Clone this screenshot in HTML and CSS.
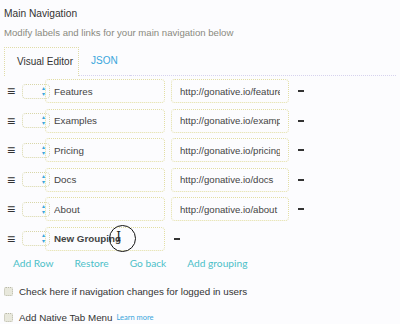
FILE: index.html
```html
<!DOCTYPE html>
<html lang="en">
<head>
    <meta charset="UTF-8">
    <meta name="viewport" content="width=device-width, initial-scale=1.0">
    <title>Main Navigation</title>
    <link rel="stylesheet" href="styles.css">
</head>
<body>
    <h1 class="title">Main Navigation</h1>
    <p class="subtitle">Modify labels and links for your main navigation below</p>

    <!-- tabs -->
    <div class="tabs">
        <div class="tab active">Visual Editor</div>
        <a class="tab" href="#">JSON</a>
        <div class="tab-fill"></div>
    </div>

    <!-- navigation rows -->
    <div class="rows">
        <div class="row">
            <span class="handle">&#8801;</span>
            <span class="level"><span class="arrows">&#9652;<br>&#9662;</span></span>
            <input class="label-input" type="text" value="Features">
            <input class="url-input" type="text" value="http://gonative.io/features">
            <span class="remove"></span>
        </div>
        <div class="row">
            <span class="handle">&#8801;</span>
            <span class="level"><span class="arrows">&#9652;<br>&#9662;</span></span>
            <input class="label-input" type="text" value="Examples">
            <input class="url-input" type="text" value="http://gonative.io/examples">
            <span class="remove"></span>
        </div>
        <div class="row">
            <span class="handle">&#8801;</span>
            <span class="level"><span class="arrows">&#9652;<br>&#9662;</span></span>
            <input class="label-input" type="text" value="Pricing">
            <input class="url-input" type="text" value="http://gonative.io/pricing">
            <span class="remove"></span>
        </div>
        <div class="row">
            <span class="handle">&#8801;</span>
            <span class="level"><span class="arrows">&#9652;<br>&#9662;</span></span>
            <input class="label-input" type="text" value="Docs">
            <input class="url-input" type="text" value="http://gonative.io/docs">
            <span class="remove"></span>
        </div>
        <div class="row">
            <span class="handle">&#8801;</span>
            <span class="level"><span class="arrows">&#9652;<br>&#9662;</span></span>
            <input class="label-input" type="text" value="About">
            <input class="url-input" type="text" value="http://gonative.io/about">
            <span class="remove"></span>
        </div>
        <div class="row">
            <span class="handle">&#8801;</span>
            <span class="level"><span class="arrows">&#9652;<br>&#9662;</span></span>
            <div class="group-wrap">
                <input class="label-input group" type="text" value="New Grouping">
                <!-- screen recorder click marker -->
                <span class="cursor-ring"><span class="ibeam">I</span></span>
            </div>
            <span class="remove"></span>
        </div>
    </div>

    <div class="actions">
        <a href="#">Add Row</a>
        <a href="#">Restore</a>
        <a href="#">Go back</a>
        <a href="#">Add grouping</a>
    </div>

    <label class="option"><span class="check"></span>Check here if navigation changes for logged in users</label>
    <label class="option"><span class="check"></span>Add Native Tab Menu <a class="learn" href="#">Learn more</a></label>
</body>
</html>
```

FILE: styles.css
```css
body {
    margin: 0;
    padding: 0 4px;
    background: #fcfcfe;
    font-family: "Liberation Sans", Arial, sans-serif;
    font-size: 10px;
    color: #333;
}

.title {
    margin: 0;
    padding-top: 7px;
    font-size: 10.2px;
    font-weight: normal;
    color: #333;
    line-height: 13px;
}

.subtitle {
    margin: 6px 0 0;
    line-height: 13px;
    font-size: 9.6px;
    color: #8a8a80;
}

.tabs {
    display: flex;
    margin-top: 8px;
    height: 29px;
}

.tab {
    padding: 0 12px;
    line-height: 28px;
    white-space: nowrap;
    color: #3aa6dc;
    text-decoration: none;
    border-bottom: 1px dotted #d6d2ee;
}

.tab.active {
    width: 49px;
    color: #333;
    border: 1px dotted #e0dca8;
    border-bottom: none;
}

.tab-fill {
    flex: 1;
    border-bottom: 1px dotted #d6d2ee;
}

.rows {
    padding-top: 3px;
}

.row {
    display: flex;
    align-items: center;
    height: 24px;
    margin-bottom: 5.6px;
}

.handle {
    box-sizing: border-box;
    width: 18px;
    padding-left: 3px;
    font-size: 14px;
    font-weight: bold;
    color: #333;
}

.level {
    width: 26px;
    height: 13px;
    border: 1px dotted #d8d6a8;
    border-radius: 4px;
    text-align: right;
    margin-right: -5px;
    position: relative;
    z-index: 1;
}

.arrows {
    display: inline-block;
    padding-right: 4px;
    font-size: 6px;
    line-height: 6px;
    color: #3aa6dc;
}

.label-input,
.url-input {
    box-sizing: border-box;
    height: 24px;
    margin: 0;
    padding: 0 8px;
    border: 1px dotted #e2dea2;
    border-radius: 4px;
    background: #fcfcfe;
    font-family: "Liberation Sans", Arial, sans-serif;
    font-size: 9.8px;
    color: #444;
    outline: none;
}

.label-input {
    width: 120px;
}

.url-input {
    width: 118px;
    margin-left: 6px;
    font-size: 9.6px;
}

.label-input.group {
    font-weight: bold;
}

.remove {
    width: 6px;
    height: 2px;
    margin-left: 9px;
    background: #333;
}

.group-wrap {
    position: relative;
}

.cursor-ring {
    position: absolute;
    left: 64px;
    top: -2px;
    width: 25px;
    height: 25px;
    border: 1.5px solid #111;
    border-radius: 50%;
    text-align: center;
}

.ibeam {
    position: absolute;
    left: 0;
    width: 17px;
    top: 5px;
    font-family: "DejaVu Serif", serif;
    font-size: 12px;
    line-height: 12px;
    color: #222;
}

.actions {
    display: flex;
    gap: 21px;
    padding: 0 0 0 9px;
    line-height: 13px;
}

.actions a {
    font-family: Lato, "Liberation Sans", sans-serif;
    font-size: 10.2px;
    color: #4cc0c8;
    text-decoration: none;
}

.option {
    display: flex;
    align-items: center;
    margin-top: 15px;
    line-height: 13px;
    font-size: 9.8px;
    color: #333;
}

.option + .option {
    margin-top: 13px;
}

.check {
    width: 7px;
    height: 7px;
    margin-right: 6px;
    border: 1px dotted #b8b8a8;
    border-radius: 2px;
    background: #e8e8dc;
}

.learn {
    margin-left: 4px;
    font-family: Lato, "Liberation Sans", sans-serif;
    font-size: 7.5px;
    color: #3aa6dc;
    text-decoration: none;
}
```
